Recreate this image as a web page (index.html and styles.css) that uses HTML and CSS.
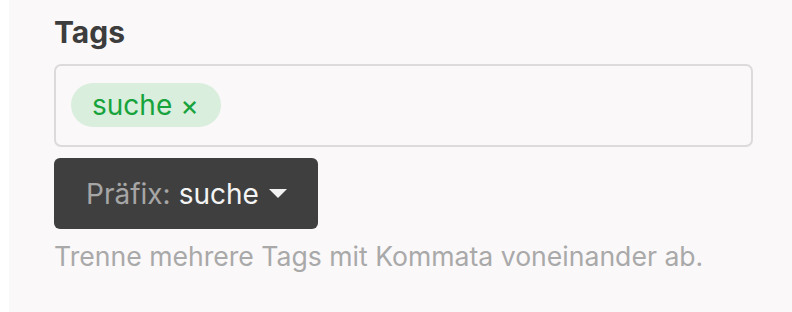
FILE: index.html
```html
<html>
<head>
    <title>Tags</title>
    <link rel="stylesheet" href="styles.css">
</head>
<body>
    <div class="panel">
        <label class="field-label">Tags</label>
        <div class="tag-input">
            <span class="tag">suche <span class="tag-remove">&times;</span></span>
        </div>
        <button class="prefix-btn"><span class="prefix-key">Präfix:</span> suche
            <svg class="caret" width="18" height="9" viewBox="0 0 18 9"><path d="M0 0 L18 0 L9 9 Z" fill="#f2f2f2"/></svg>
        </button>
        <p class="hint">Trenne mehrere Tags mit Kommata voneinander ab.</p>
    </div>
</body>
</html>
```

FILE: styles.css
```css
* { margin: 0; padding: 0; box-sizing: border-box; }
body { background: #fff; font-family: Inter, "Noto Sans", sans-serif; }
.panel { margin-left: 9px; height: 312px; background: #faf8f9; padding: 12px 0 0 45px; display: flex; flex-direction: column; align-items: flex-start; }
.field-label { font-size: 30px; font-weight: 700; color: #3d3d3d; line-height: 40px; }
.tag-input { margin-top: 12px; width: 699px; height: 83px; border: 2px solid #dcdadb; border-radius: 7px; padding: 17px 0 0 15px; }
.tag { display: inline-flex; align-items: center; height: 44px; padding: 0 22px 0 21px; border-radius: 22px; background: #d9eedd; color: #17a33b; font-size: 28px; }
.tag-remove { margin-left: 8px; font-size: 28px; }
.prefix-btn { margin-top: 11px; height: 71px; padding: 0 31px 0 32px; border: 0; border-radius: 6px; background: #3f3f3f; color: #f4f4f4; font-family: inherit; font-size: 28px; display: flex; align-items: center; }
.prefix-key { color: #a6a6a6; margin-right: 8px; }
.caret { margin-left: 10px; }
.hint { margin-top: 11px; font-size: 26.6px; color: #a9a9a9; }
```
